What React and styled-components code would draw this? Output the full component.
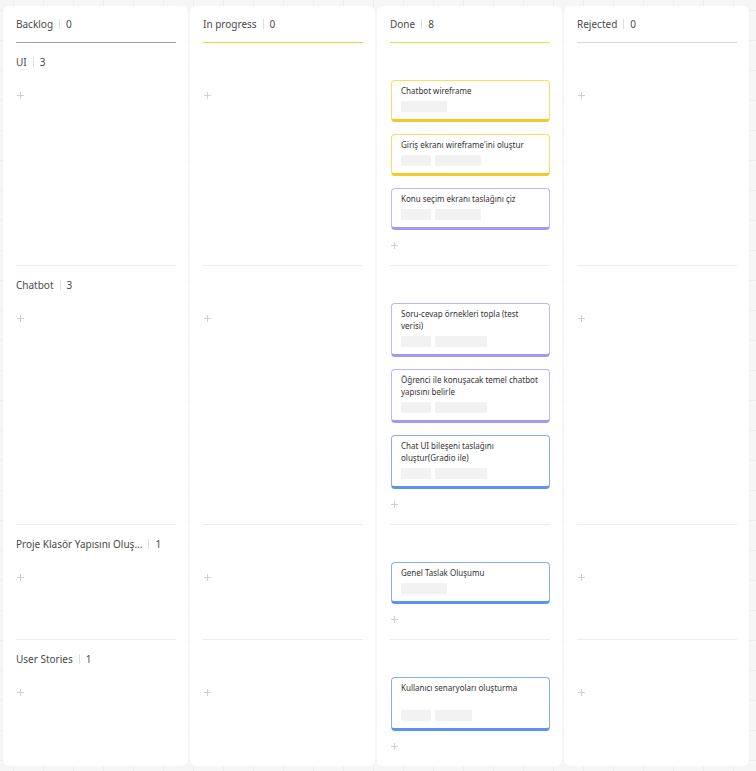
import React from "react";
import styled, { createGlobalStyle } from "styled-components";

const GlobalStyle = createGlobalStyle`
  html, body {
    margin: 0;
    padding: 0;
    min-height: 100%;
  }
  body {
    font-family: "Noto Sans", "Open Sans", sans-serif;
    background-color: #f6f6f6;
    background-image:
      linear-gradient(to right, #eeeeee 1px, transparent 1px),
      linear-gradient(to bottom, #eeeeee 1px, transparent 1px);
    background-size: 30px 30px;
    background-position: 13px 10px;
    min-height: 771px;
  }
`;

const Board = styled.div`
  display: grid;
  grid-template-columns: repeat(4, 185px);
  grid-template-rows: repeat(5, auto);
  column-gap: 2px;
  padding: 6px 0 4px 3px;
`;

const Panel = styled.div`
  grid-column: ${(p) => p.$col};
  grid-row: 1 / -1;
  background: #ffffff;
  border-radius: 6px;
`;

const ColumnHeader = styled.div`
  grid-column: ${(p) => p.$col};
  grid-row: 1;
  margin: 0 12px 0 13px;
  height: 36px;
  display: flex;
  align-items: center;
  border-bottom: 1px solid ${(p) => p.$line};
  font-size: 10px;
  color: #4a4a4a;
`;

const CountDivider = styled.span`
  display: inline-block;
  width: 1px;
  height: 10px;
  background: #dddddd;
  margin: 0 6px;
`;

const LaneCell = styled.div`
  grid-column: ${(p) => p.$col};
  grid-row: ${(p) => p.$row};
  margin: 0 12px 0 13px;
  border-top: ${(p) => (p.$first ? "none" : "1px solid #ececec")};
  display: flex;
  flex-direction: column;
  padding-bottom: 14px;
`;

const LaneTitle = styled.div`
  height: 37px;
  display: flex;
  align-items: center;
  font-size: 10px;
  color: #4a4a4a;
  white-space: nowrap;
`;

const CardList = styled.div`
  display: flex;
  flex-direction: column;
  gap: 12px;
`;

const Card = styled.div`
  background: #ffffff;
  border: 1px solid ${(p) => p.$border};
  border-bottom: 3px solid ${(p) => p.$bottom};
  border-radius: 4px;
  padding: 4px 9px 7px 9px;
  margin-left: 1px;
`;

const CardTitle = styled.div`
  font-size: 8px;
  line-height: 12px;
  color: #333333;
  min-height: ${(p) => (p.$lines || 1) * 12}px;
`;

const TagRow = styled.div`
  display: flex;
  gap: 4px;
  margin-top: 4px;
`;

const Tag = styled.span`
  display: block;
  width: ${(p) => p.$w}px;
  height: 11px;
  background: #f2f2f2;
  border-radius: 1px;
`;

const AddRow = styled.div`
  margin-top: 9px;
  height: 12px;
  display: flex;
  align-items: center;
  padding-left: 1px;
`;

const PlusIcon = () => (
  <svg width="7" height="7" viewBox="0 0 7 7">
    <path d="M3.5 0V7M0 3.5H7" stroke="#cfcfcf" strokeWidth="1" />
  </svg>
);

const COLORS = {
  yellow: ["#fbdc5c", "#f5c928"],
  purple: ["#c3b6f8", "#a897f2"],
  blue: ["#84b0f2", "#5d93ec"],
};

const columns = [
  { name: "Backlog", count: 0, line: "#a3a3a3" },
  { name: "In progress", count: 0, line: "#f7cf2e" },
  { name: "Done", count: 8, line: "#d6e84e" },
  { name: "Rejected", count: 0, line: "#d8d8d8" },
];

const lanes = [
  {
    name: "UI",
    count: 3,
    done: [
      { title: "Chatbot wireframe", color: "yellow", tags: [46] },
      { title: "Giriş ekranı wireframe'ini oluştur", color: "yellow", tags: [30, 46] },
      { title: "Konu seçim ekranı taslağını çiz", color: "purple", tags: [30, 46] },
    ],
  },
  {
    name: "Chatbot",
    count: 3,
    done: [
      { title: "Soru-cevap örnekleri topla (test verisi)", color: "purple", tags: [30, 52], lines: 2 },
      { title: "Öğrenci ile konuşacak temel chatbot yapısını belirle", color: "purple", tags: [30, 52], lines: 2 },
      { title: "Chat UI bileşeni taslağını oluştur(Gradio ile)", color: "blue", tags: [30, 52], lines: 2 },
    ],
  },
  {
    name: "Proje Klasör Yapısını Oluş...",
    count: 1,
    done: [{ title: "Genel Taslak Oluşumu", color: "blue", tags: [46] }],
  },
  {
    name: "User Stories",
    count: 1,
    done: [{ title: "Kullanıcı senaryoları oluşturma", color: "blue", tags: [30, 37], lines: 2 }],
  },
];

export default function App() {
  return (
    <>
      <GlobalStyle />
      <Board>
        {columns.map((c, i) => (
          <Panel key={"p" + i} $col={i + 1} />
        ))}
        {columns.map((c, i) => (
          <ColumnHeader key={"h" + i} $col={i + 1} $line={c.line}>
            {c.name}
            <CountDivider />
            {c.count}
          </ColumnHeader>
        ))}
        {lanes.map((lane, li) =>
          columns.map((c, ci) => {
            const cards = ci === 2 ? lane.done : [];
            return (
              <LaneCell key={li + "-" + ci} $col={ci + 1} $row={li + 2} $first={li === 0}>
                <LaneTitle>
                  {ci === 0 && (
                    <>
                      {lane.name}
                      <CountDivider />
                      {lane.count}
                    </>
                  )}
                </LaneTitle>
                {cards.length > 0 && (
                  <CardList>
                    {cards.map((card, k) => (
                      <Card key={k} $border={COLORS[card.color][0]} $bottom={COLORS[card.color][1]}>
                        <CardTitle $lines={card.lines}>{card.title}</CardTitle>
                        <TagRow>
                          {card.tags.map((w, t) => (
                            <Tag key={t} $w={w} />
                          ))}
                        </TagRow>
                      </Card>
                    ))}
                  </CardList>
                )}
                <AddRow>
                  <PlusIcon />
                </AddRow>
              </LaneCell>
            );
          })
        )}
      </Board>
    </>
  );
}
